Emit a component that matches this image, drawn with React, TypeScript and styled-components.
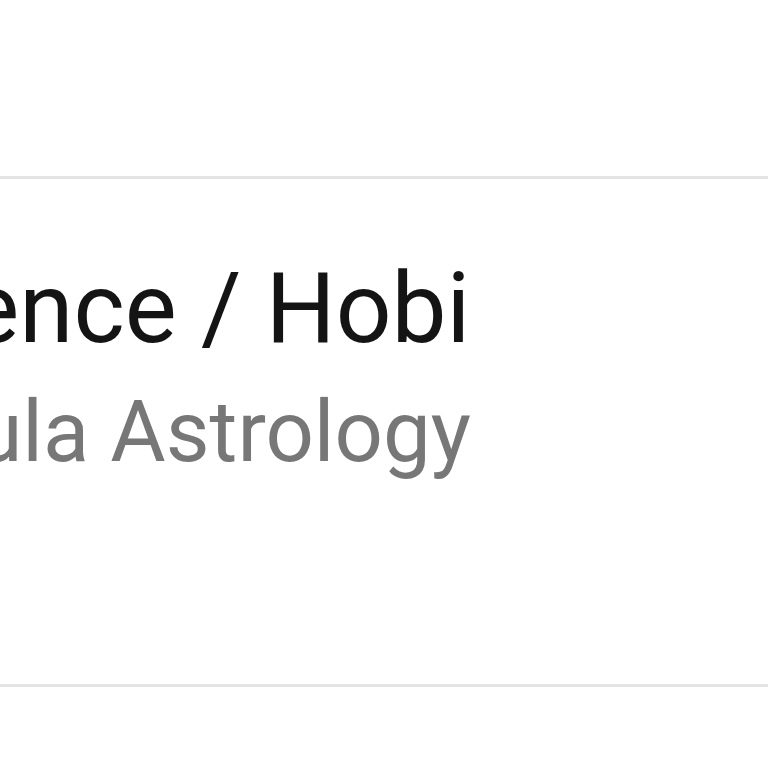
import styled, { createGlobalStyle } from "styled-components";

const Global = createGlobalStyle`
  html, body {
    margin: 0;
    padding: 0;
    background: #ffffff;
    overflow: hidden;
  }
  body {
    font-family: Roboto, "Noto Sans", "Liberation Sans", sans-serif;
  }
`;

const List = styled.div`
  display: flex;
  flex-direction: column;
  width: 768px;
  height: 768px;
  overflow: hidden;
`;

const Spacer = styled.div`
  height: 176px;
`;

const Divider = styled.div`
  height: 3px;
  background: #e4e4e4;
  flex-shrink: 0;
`;

const Row = styled.div`
  display: flex;
  align-items: flex-start;
  height: 505px;
  padding-top: 71px;
  box-sizing: border-box;
`;

const Info = styled.div`
  display: flex;
  flex-direction: column;
  gap: 14px;
  margin-left: -166px;
  white-space: nowrap;
`;

const Title = styled.div`
  font-size: 98px;
  line-height: 118px;
  color: #141414;
`;

const Subtitle = styled.div`
  margin-left: -12px;
  font-size: 85px;
  line-height: 100px;
  color: #777777;
`;

export default function App() {
  return (
    <>
      <Global />
      <List>
        <Spacer />
        <Divider />
        <Row>
          <Info>
            <Title>Science / Hobi</Title>
            <Subtitle>Nebula Astrology</Subtitle>
          </Info>
        </Row>
        <Divider />
      </List>
    </>
  );
}
